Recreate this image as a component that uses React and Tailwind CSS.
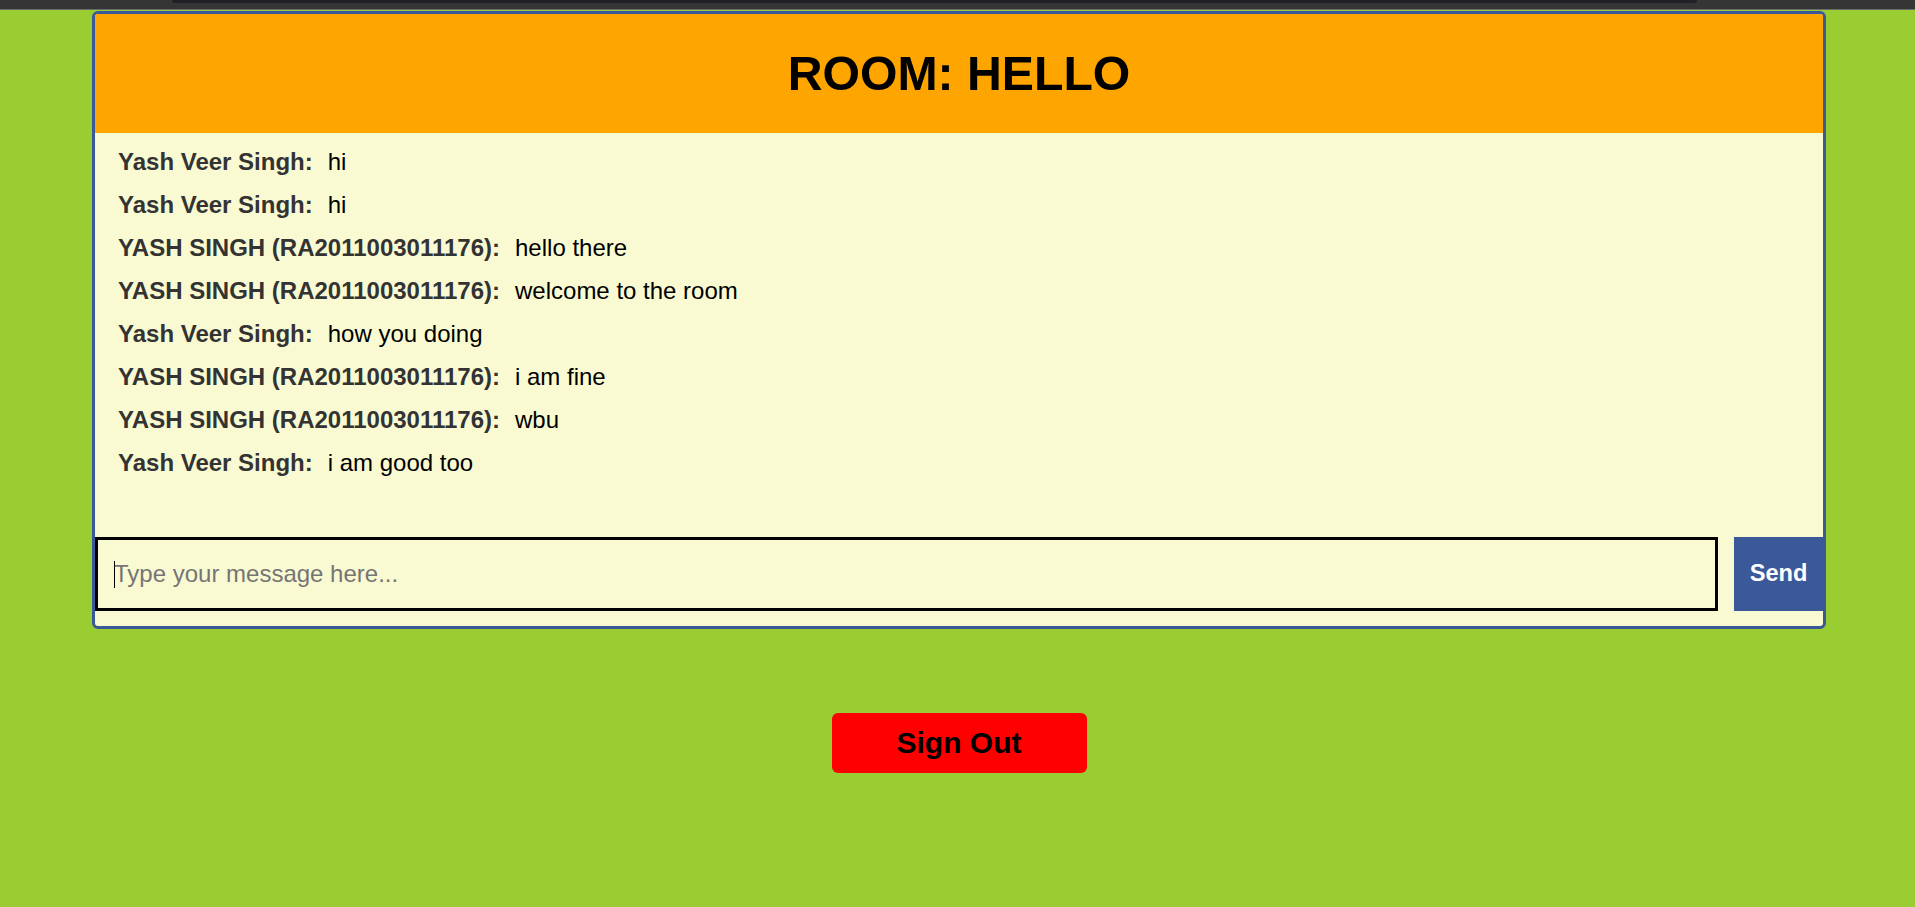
import React from "react";

const messages = [
  ["Yash Veer Singh:", "hi"],
  ["Yash Veer Singh:", "hi"],
  ["YASH SINGH (RA2011003011176):", "hello there"],
  ["YASH SINGH (RA2011003011176):", "welcome to the room"],
  ["Yash Veer Singh:", "how you doing"],
  ["YASH SINGH (RA2011003011176):", "i am fine"],
  ["YASH SINGH (RA2011003011176):", "wbu"],
  ["Yash Veer Singh:", "i am good too"],
];

export default function App() {
  return (
    <div
      className="min-h-screen bg-[#9acd32]"
      style={{ fontFamily: '"Liberation Sans", Arial, sans-serif' }}
    >
      <div className="relative h-[9px] bg-[#353535]">
        <div className="absolute left-[172px] top-0 h-[3px] w-[1525px] rounded-b-[4px] bg-[#202124]" />
      </div>
      <div className="h-[1px] bg-[#6b6b6b]" />
      <div className="ml-[92px] w-[1734px] pt-[1px]">
        <div className="overflow-hidden rounded-[6px] border-[3px] border-[#3b5998] bg-[#fafad2]">
          <div className="h-[119px] bg-[#ffa500] pt-[32px] text-center text-[48.2px] font-bold leading-[55px] text-black">
            ROOM: HELLO
          </div>
          <div className="h-[404px] pl-[23px] pt-[7px]">
            {messages.map(([name, text], i) => (
              <div key={i} className="flex h-[43px] items-start text-[24px] leading-[43px]">
                <span className="mr-[15px] font-bold text-[#333333]">{name}</span>
                <span className="text-black">{text}</span>
              </div>
            ))}
          </div>
          <div className="flex h-[74px] gap-[16px]">
            <div className="relative flex-1">
              <input
                type="text"
                placeholder="Type your message here..."
                className="h-full w-full border-[3px] border-black bg-transparent px-[16px] text-[24px] text-black outline-none placeholder:text-[#757575]"
              />
              <span className="absolute left-[19px] top-[24px] h-[27px] w-[1px] bg-black" />
            </div>
            <button className="h-full w-[89px] bg-[#3b5998] text-[23.6px] font-bold text-white">
              Send
            </button>
          </div>
          <div className="h-[15px]" />
        </div>
        <div className="mt-[84px] flex justify-center">
          <button className="h-[60px] w-[255px] rounded-[6px] bg-[#ff0000] pb-[2px] text-[30px] font-bold text-black">
            Sign Out
          </button>
        </div>
      </div>
    </div>
  );
}
